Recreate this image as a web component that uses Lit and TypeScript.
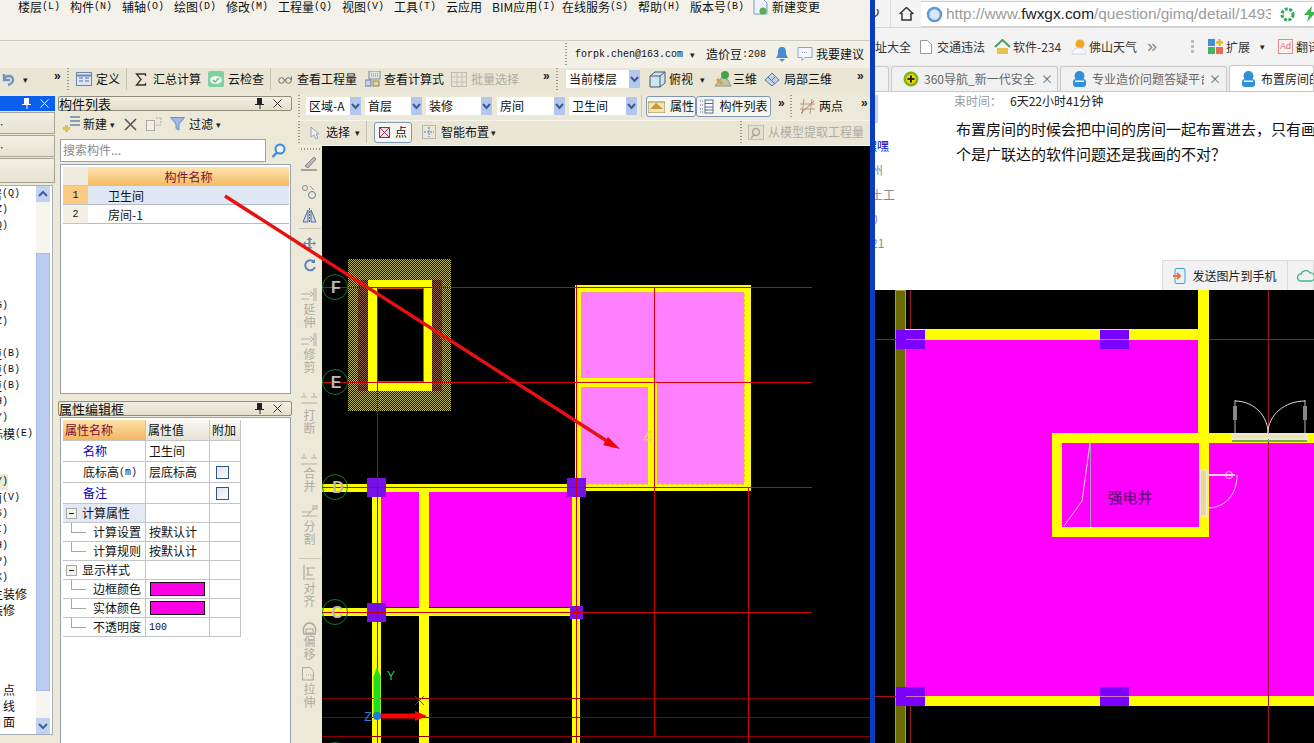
import { html, css, LitElement, TemplateResult } from 'lit';
import { customElement } from 'lit/decorators.js';

type Slot_t = [number, TemplateResult | string];

// icons, all small inline svg
const wrapSvg = (w: number, h: number, inner: string) =>
  html`<svg class="ic" width=${w} height=${h} viewBox="0 0 ${w} ${h}" .innerHTML=${inner}></svg>`;

const icons = {
  undo: wrapSvg(16, 16, '<path d="M4 3v6h6M4 8c2-4 8-4 9 0 .5 3-2 5-5 6" fill="none" stroke="#6f93c9" stroke-width="2.4"/>'),
  define: wrapSvg(16, 14, '<rect x=".5" y=".5" width="15" height="13" fill="#dbe6f6" stroke="#6c86ad"/><path d="M.5 3.5h15" stroke="#6c86ad" stroke-width="2"/><path d="M3 6h4M3 9h4M9 6h4M9 9h4" stroke="#5b7396"/>'),
  sigma: wrapSvg(12, 13, '<path d="M10.5 3V1H1.5l4.5 5.5-4.5 5.5h9v-2" fill="none" stroke="#333" stroke-width="1.3"/>'),
  cloud: wrapSvg(16, 16, '<rect width="16" height="16" rx="2" fill="#7ed2a0"/><ellipse cx="8" cy="9" rx="6" ry="4" fill="#f4f4f0"/><path d="M5 9l2 2 4-4" fill="none" stroke="#62b98a" stroke-width="1.4"/>'),
  glasses: wrapSvg(14, 9, '<circle cx="3.5" cy="5.5" r="2.8" fill="none" stroke="#6d6d66"/><circle cx="10.5" cy="5.5" r="2.8" fill="none" stroke="#6d6d66"/><path d="M6 5h2M13 5l1-4" stroke="#6d6d66"/>'),
  calc: wrapSvg(16, 16, '<rect x="4" y="0" width="11" height="8" fill="#e4e6e4" stroke="#7c8a9c"/><path d="M6 3h7M6 5h7" stroke="#7c8a9c" stroke-dasharray="1 1"/><rect x="0" y="9" width="6" height="6" fill="#c4d4ee" stroke="#6680a6"/><rect x="8" y="10" width="6" height="5" fill="#e8d69a" stroke="#8f8458"/>'),
  batch: wrapSvg(16, 15, '<rect x=".5" y=".5" width="15" height="14" fill="#e6e4d8" stroke="#bdbcb0"/><path d="M1 5h14M1 10h14M6 1v13M11 1v13" stroke="#c3c2b6"/>'),
  box: wrapSvg(17, 17, '<path d="M1 5l5-4h10v11l-5 4H1z" fill="#cfe4ee" stroke="#44596c"/><path d="M1 5h10v11M11 5l5-4" fill="none" stroke="#44596c"/>'),
  tri: wrapSvg(18, 18, '<path d="M1 16l7-9 6 3 3 6z" fill="#b8c8b0" stroke="#8a9a84"/><circle cx="11" cy="5" r="4" fill="#4aa04a"/><path d="M3 9l5 5" stroke="#d8a040" stroke-width="3"/>'),
  local: wrapSvg(16, 15, '<path d="M1 8l7-7 7 7-7 6z" fill="#bdd0e8" stroke="#5f7a9a"/><path d="M4 5l7 7M8 1l3 3M7 9l4-4" stroke="#5f7a9a"/>'),
  bell: wrapSvg(14, 16, '<path d="M7 1c3 0 4 2 4 5 0 3 1 4 2 6H1c1-2 2-3 2-6 0-3 1-5 4-5z" fill="#4d8ad6"/><path d="M4 13h6l-3 3z" fill="#4d8ad6"/>'),
  chat: wrapSvg(16, 16, '<path d="M1 1.5h14v10H8l-3 3v-3H1z" fill="#f4f6fb" stroke="#8ca4cc"/><path d="M5 6.5h6" stroke="#8ca4cc" stroke-dasharray="1 1"/>'),
  fileNew: wrapSvg(15, 17, '<path d="M1 1h9l4 4v11H1z" fill="#eef3fb" stroke="#7c9bc8"/><circle cx="10" cy="13" r="3.5" fill="#58b04e"/>'),
  add: wrapSvg(18, 16, '<path d="M7 1h10M7 5h10M7 9h10" stroke="#6c82a6" stroke-width="1.4"/><rect x="2" y="9" width="3" height="7" fill="#e2c04c"/><rect x="0" y="11" width="7" height="3" fill="#e2c04c"/>'),
  close: wrapSvg(13, 13, '<path d="M1 1l11 11M12 1L1 12" stroke="#555" stroke-width="1.6"/>'),
  copy: wrapSvg(16, 14, '<rect x=".5" y="3.5" width="8" height="10" fill="#f1f0e8" stroke="#a9a9a0"/><path d="M10 1h5M15 1v5M10 8h5" fill="none" stroke="#a9a9a0" stroke-dasharray="2 1"/>'),
  filter: wrapSvg(15, 14, '<path d="M.5 .5h14L9 7v6l-3-1.5V7z" fill="#9bbce8" stroke="#6d8fc0"/>'),
  search: wrapSvg(15, 15, '<circle cx="9" cy="6" r="4.5" fill="#e8f2fc" stroke="#3d8dd6" stroke-width="2"/><path d="M5.5 10L1.5 14" stroke="#3d8dd6" stroke-width="2.4"/>'),
  prop: wrapSvg(17, 13, '<rect y="2" width="17" height="11" fill="#f0e6b8" stroke="#9a8a50"/><path d="M2 9l6-6 7 6z" fill="#c89a30"/>'),
  list: wrapSvg(15, 15, '<rect x="6" y="1" width="8" height="13" fill="#fff" stroke="#55708f"/><path d="M6 4.5h8M6 8h8M6 11h8" stroke="#55708f"/><path d="M1 2h3M1 6h3M1 10h3M1 13h3" stroke="#55708f" stroke-dasharray="1 1"/>'),
  twoPt: wrapSvg(15, 15, '<path d="M4 0l-2 15M12 0l-2 15M0 5h15M0 10h15" stroke="#b09a80"/><path d="M1 14L14 2" stroke="#c07050"/>'),
  cursor: wrapSvg(10, 13, '<path d="M1 1v10l3-2 2 4 2-1-2-4h3z" fill="#eef0f6" stroke="#96a0b0"/>'),
  pt: wrapSvg(11, 11, '<rect x=".5" y=".5" width="10" height="10" fill="#dbe4f4" stroke="#33558a"/><path d="M1 1l9 9M10 1l-9 9" stroke="#b03050"/>'),
  smart: wrapSvg(14, 14, '<rect x=".5" y=".5" width="13" height="13" fill="none" stroke="#7e8a9a" stroke-dasharray="1 1"/><path d="M7 2v10M2 7h10" stroke="#5a7dad" stroke-dasharray="2 1"/>'),
  pick: wrapSvg(16, 15, '<rect x=".5" y=".5" width="15" height="14" fill="#e3e1d2" stroke="#c0bfb2"/><circle cx="8" cy="7" r="3.5" fill="none" stroke="#a9a89c" stroke-width="1.5"/><path d="M6 10l-3 3" stroke="#a9a89c" stroke-width="1.5"/>'),
  brush: wrapSvg(16, 15, '<path d="M4 10L13 1l2 2-8 9z" fill="#b8b8c8" stroke="#888"/><path d="M0 14h16" stroke="#8a8a80" stroke-width="1.5"/>'),
  rings: wrapSvg(15, 15, '<circle cx="3" cy="3" r="2.5" fill="none" stroke="#8a8f96"/><circle cx="10" cy="10" r="3.5" fill="none" stroke="#6e7f96"/><path d="M8 1l4 4" stroke="#8a8f96"/>'),
  mirror: wrapSvg(15, 15, '<path d="M1 14L6 2v12zM14 14L9 2v12z" fill="#cfdaec" stroke="#4f6f9f"/><path d="M7.5 0v15" stroke="#4f6f9f" stroke-dasharray="2 1"/>'),
  move: wrapSvg(13, 13, '<path d="M6.5 0l3 3h-2v3h3V4l2.500 2.500L10.500 9V7h-3v3h2l-3 3-3-3h2V7h-3v2L0 6.500 2.500 4v2h3V3h-2z" fill="#6c88b0"/>'),
  rotate: wrapSvg(13, 13, '<path d="M11 3a5 5 0 1 0 1 5" fill="none" stroke="#5a82c0" stroke-width="2"/><path d="M12 0v4H8z" fill="#5a82c0"/>'),
  extend: wrapSvg(16, 13, '<path d="M0 6h10M13 0v13M15 0v13M0 11h8" stroke="#b2b1a4"/><path d="M9 3l3 3-3 3" fill="none" stroke="#b2b1a4"/>'),
  split: wrapSvg(16, 13, '<path d="M0 4h6M10 4h6M0 10h16M3 0v3M13 0v3" stroke="#b2b1a4"/>'),
  seg: wrapSvg(17, 13, '<path d="M1 11h15M1 7h9M15 1L6 11" stroke="#b2b1a4"/><rect x="12" y="0" width="4" height="4" fill="none" stroke="#b2b1a4"/>'),
  align: wrapSvg(13, 15, '<path d="M1 0v15M3 14h9M3 10h7M3 3h9M5 3v7" stroke="#aaa99c" stroke-width="1.2"/>'),
  offset: wrapSvg(15, 13, '<path d="M2 12c-2-6 1-11 5.500-11S15 6 13 12z" fill="none" stroke="#aaa99c" stroke-width="1.400"/><rect x="4" y="7" width="7" height="4" fill="none" stroke="#aaa99c"/>'),
  stretch: wrapSvg(14, 14, '<path d="M.5 13V.5h8l3 4V13z" fill="none" stroke="#aaa99c"/><path d="M4 8h6v5" fill="none" stroke="#aaa99c" stroke-dasharray="1 1"/>'),
  up: wrapSvg(14, 16, '<rect width="14" height="16" fill="#c2d3f2"/><path d="M3 10l4-4 4 4" fill="none" stroke="#3f5f9a" stroke-width="2"/>'),
  down: wrapSvg(14, 16, '<rect width="14" height="16" fill="#c2d3f2"/><path d="M3 6l4 4 4-4" fill="none" stroke="#3f5f9a" stroke-width="2"/>'),
  combo: wrapSvg(11, 18, '<rect width="11" height="18" fill="#b4c8ee"/><path d="M2 7l3.500 4L9 7" fill="none" stroke="#3c5a96" stroke-width="2"/>'),
  pin: wrapSvg(9, 11, '<path d="M2 0h5v6h2v1H5.500v4h-1V7H0V6h2z" fill="#222"/>'),
  pinW: wrapSvg(9, 11, '<path d="M2 0h5v6h2v1H5.500v4h-1V7H0V6h2z" fill="#fff"/>'),
  xThin: wrapSvg(9, 9, '<path d="M.5 .5l8 8M8.500 .5l-8 8" stroke="#333"/>'),
  xW: wrapSvg(9, 9, '<path d="M.5 .5l8 8M8.500 .5l-8 8" stroke="#fff"/>'),
  home: wrapSvg(15, 14, '<path d="M.5 7L7.500 .5l7 6.500M3 6v7h9V6" fill="none" stroke="#333" stroke-width="1.500"/>'),
  globe: wrapSvg(17, 17, '<circle cx="8.500" cy="8.500" r="6.500" fill="#d6e8f8" stroke="#5a9ad8" stroke-width="2.500"/>'),
  leaf: wrapSvg(15, 15, '<circle cx="7.500" cy="7.500" r="5.500" fill="none" stroke="#34a853" stroke-width="3" stroke-dasharray="3 1.500"/>'),
  bolt: wrapSvg(12, 16, '<path d="M8 0L0 9h5l-2 7 9-10H7z" fill="#3cb54a"/>'),
  page: wrapSvg(12, 14, '<path d="M.5 .5h7l4 4v9H.5z" fill="#fff" stroke="#999"/>'),
  house: wrapSvg(17, 16, '<path d="M1 8l7.500-7 7.500 7" fill="none" stroke="#4a9d5a" stroke-width="2"/><rect x="3" y="9" width="11" height="6" fill="#e6c350"/>'),
  sun: wrapSvg(16, 16, '<circle cx="9" cy="5" r="4.500" fill="#f5a623"/><path d="M1 15c0-4 3-6 7-6s7 2 7 6z" fill="#f4f6f8" stroke="#cfd8e0"/>'),
  ext: wrapSvg(15, 15, '<rect width="7" height="7" fill="#3f8ce0"/><rect y="8" width="7" height="7" fill="#40b55c"/><rect x="8" y="8" width="7" height="7" fill="#ea6a5a"/><path d="M11.500 0v7M8 3.500h7" stroke="#f0b429" stroke-width="2.400"/>'),
  user: wrapSvg(15, 16, '<circle cx="7.500" cy="5" r="5" fill="#2f8fd8"/><rect x="1" y="8" width="13" height="8" rx="3" fill="#2f8fd8"/><rect x="3" y="9.500" width="9" height="1.500" fill="#fff"/>'),
  green360: wrapSvg(16, 16, '<circle cx="8" cy="8" r="7.500" fill="#7ab51d"/><circle cx="8" cy="8" r="5" fill="#f5d100"/><path d="M8 4.500v7M4.500 8h7" stroke="#2a2a2a" stroke-width="2"/>'),
  send: wrapSvg(13, 16, '<rect x="2" y=".5" width="10" height="15" rx="1" fill="#e4f2fb" stroke="#3aa0dc"/><path d="M0 8h7M4 5l3 3-3 3" fill="none" stroke="#ef6a3a" stroke-width="2"/>'),
  cloudO: wrapSvg(18, 12, '<path d="M4 11a3.500 3.500 0 0 1 0-7 5 5 0 0 1 9-1 4 4 0 0 1 1 8z" fill="none" stroke="#41b883" stroke-width="1.300"/>'),
};

const combo = (label: string, x2: number) => html`<span class="combo" style="width:${x2}px"><span class="cv">${label}</span>${icons.combo}</span>`;
const dd = html`<span class="dd">▾</span>`;
const grip = html`<span class="grip"></span>`;
const vsep = html`<span class="vsep"></span>`;
const more = html`<span class="more">»</span>`;
const k = (s: string) => html`<span class="k">${s}</span>`;

const menuItems: Slot_t[] = [
  [-15, html`${k(')')}`], [18, html`楼层${k('(L)')}`], [70, html`构件${k('(N)')}`], [122, html`辅轴${k('(O)')}`],
  [174, html`绘图${k('(D)')}`], [226, html`修改${k('(M)')}`], [278, html`工程量${k('(Q)')}`], [342, html`视图${k('(V)')}`],
  [394, html`工具${k('(T)')}`], [446, '云应用'], [492, html`BIM应用${k('(I)')}`], [562, html`在线服务${k('(S)')}`],
  [638, html`帮助${k('(H)')}`], [690, html`版本号${k('(B)')}`], [753, icons.fileNew], [772, '新建变更'],
];

const subItems: Slot_t[] = [
  [565, grip], [575, html`<span class="mono">forpk.chen@163.com</span>`], [690, dd], [706, html`造价豆${k(':208')}`],
  [775, icons.bell], [797, icons.chat], [816, '我要建议'],
];

const mainBar: Slot_t[] = [
  [0, icons.undo], [23, dd], [54, more], [67, grip], [76, icons.define], [96, '定义'], [126, vsep], [135, icons.sigma],
  [153, '汇总计算'], [208, icons.cloud], [228, '云检查'], [270, vsep], [278, icons.glasses], [297, '查看工程量'],
  [365, icons.calc], [384, '查看计算式'], [451, icons.batch], [471, html`<span class="dim">批量选择</span>`], [543, more], [556, grip],
  [566, combo('当前楼层', 74)], [649, icons.box], [669, '俯视'], [700, dd], [714, icons.tri], [733, '三维'],
  [764, icons.local], [784, '局部三维'], [857, more],
];

const drawBarA: Slot_t[] = [
  [2, grip], [10, combo('区域-A', 55)], [69, combo('首层', 57)], [130, combo('装修', 66)], [201, combo('房间', 68)],
  [273, combo('卫生间', 68)], [345, vsep],
  [350, html`<span class="tbtn" style="width:50px">${icons.prop}<span>属性</span></span>`],
  [400, html`<span class="tbtn" style="width:75px">${icons.list}<span>构件列表</span></span>`],
  [482, more], [494, grip], [504, icons.twoPt], [523, '两点'], [565, more],
];

const drawBarB: Slot_t[] = [
  [2, grip], [14, icons.cursor], [30, '选择'], [59, dd], [70, vsep],
  [78, html`<span class="tbtn" style="width:38px">${icons.pt}<span>点</span></span>`],
  [126, icons.smart], [145, '智能布置'], [195, dd], [444, grip], [452, icons.pick],
  [472, html`<span class="dim">从模型提取工程量</span>`],
];

const sideBar: Slot_t[] = [
  [2, html`<span class="hgrip"></span>`], [10, icons.brush], [39, icons.rings], [62, icons.mirror], [82, html`<span class="hsep"></span>`],
  [91, icons.move], [113, icons.rotate], [142, icons.extend], [157, html`<span class="vt">延伸</span>`],
  [187, icons.extend], [202, html`<span class="vt">修剪</span>`], [247, icons.split], [263, html`<span class="vt">打断</span>`],
  [308, icons.split], [321, html`<span class="vt">合并</span>`], [359, icons.seg], [374, html`<span class="vt">分割</span>`],
  [412, html`<span class="hsep"></span>`], [419, icons.align], [436, html`<span class="vt">对齐</span>`],
  [476, icons.offset], [489, html`<span class="vt">偏移</span>`], [521, icons.stretch], [537, html`<span class="vt">拉伸</span>`],
];

const navRows: [number, string, number][] = [
  [0, '居(Q)', 20], [1, 'Z)', 8], [2, 'Q)', 8], [7, 'G)', 8], [8, 'Z)', 8], [10, '更(B)', 20], [11, '更(B)', 20], [12, '更(B)', 20],
  [13, 'H)', 8], [14, 'Y)', 8], [15, '标模(E)', 33], [18, 'Y)', 8], [19, '面(V)', 20], [20, 'S)', 8], [21, 'I)', 8], [22, 'H)', 8],
  [23, 'P)', 8], [24, 'X)', 8], [25, '主装修', 27], [26, '装修', 15], [31, '点', 15], [32, '线', 15], [33, '面', 15],
];

const bookmarks: Slot_t[] = [
  [-12, '网址大全'], [45, icons.page], [62, '交通违法'], [119, icons.house], [138, '软件-234'], [196, icons.sun], [214, '佛山天气'],
  [272, html`<span class="bm-more">»</span>`], [316, html`<span class="bgrip"></span>`], [333, icons.ext], [351, '扩展'], [385, dd],
  [403, html`<span class="adbox">Ad</span>`], [421, '翻译'],
];

@customElement('app-root')
export class AppRoot extends LitElement {
  static styles = css`
    :host { display: block; width: 1314px; height: 743px; overflow: hidden; position: relative;
      font: 12px/16px "Noto Sans CJK SC", "Liberation Sans", sans-serif; color: #111; background: #ece9d8; }
    .root { display: flex; height: 743px; }
    .app { width: 870px; display: flex; flex-direction: column; flex: none; }
    .edge { width: 5px; background: #0a3cc0; flex: none; }
    .side { flex: 1; min-width: 0; display: flex; flex-direction: column; overflow: hidden; }

    .ic { display: block; flex: none; }
    .slots { display: flex; align-items: center; white-space: nowrap; }
    .slot { flex: none; display: flex; align-items: center; }
    .k { font: 10px "Liberation Mono", monospace; }
    .mono { font: 10px "Liberation Mono", monospace; letter-spacing: 0; }
    .dim { color: #aeada0; }
    .dd { font-size: 9px; color: #222; line-height: 1; }
    .more { font: bold 12px "Liberation Sans", sans-serif; color: #222; margin-top: -6px; }
    .grip { display: block; width: 2px; height: 22px; background: repeating-linear-gradient(#9c9a88 0 1px, transparent 1px 3px); }
    .hgrip { display: block; width: 20px; height: 2px; margin-left: 3px; background: repeating-linear-gradient(90deg, #9c9a88 0 1px, transparent 1px 3px); }
    .vsep { display: block; width: 1px; height: 22px; background: #c8c6b4; }
    .hsep { display: block; width: 22px; height: 1px; margin-left: 2px; background: #c8c6b4; }

    .menu { height: 40px; background: #f3f1e9; border-bottom: 1px solid #cfcdbc; flex: none; overflow: hidden; line-height: 12px; }
    .menu .slot { height: 13px; }
    .sub { height: 25px; padding-top: 2px; background: #f2f0e7; flex: none; }
    .main { height: 27px; background: #e9e6d5; flex: none; }

    .combo { display: flex; align-items: center; justify-content: space-between; height: 18px; background: #fff; padding-left: 3px; box-sizing: border-box; }
    .combo .cv { flex: 1; }
    .tbtn { display: flex; align-items: center; gap: 5px; justify-content: center; height: 21px; box-sizing: border-box;
      border: 1px solid #8296b4; border-radius: 3px; background: #f6f6f0; }

    .work { flex: 1; display: flex; min-height: 0; }
    .nav { width: 55px; flex: none; display: flex; flex-direction: column; background: #ece9d8; padding-top: 1px; }
    .ttl-blue { height: 15px; background: #0a5fee; display: flex; align-items: center; justify-content: flex-end; gap: 9px; padding-right: 6px; flex: none; }
    .acc { height: 22px; margin-top: 1px; border: solid #a5a394; border-width: 1px 1px 1px 0; box-sizing: border-box; background: linear-gradient(#f2f0e5, #e6e3d2); flex: none; display: flex; align-items: center; }
    .acc.l { height: 25px; }
    .navbody { flex: 1; display: flex; margin: 2px 2px 8px 0; background: #fff; border: solid #a9adb6; border-width: 1px 1px 1px 0; min-height: 0; }
    .navlist { width: 36px; flex: none; overflow: hidden; }
    .navrow { height: 16px; display: flex; justify-content: flex-end; overflow: hidden; white-space: nowrap; font: 12px/16px "Noto Sans CJK SC", sans-serif; }
    .navrow .k { line-height: 16px; }
    .navrow.sel { background: #ecead8; }
    .scroll { width: 14px; display: flex; flex-direction: column; background: #f6f5ef; }
    .track { height: 51px; flex: none; }
    .thumb { flex: 1; background: #b9ccf2; border: 1px solid #a6bbe6; box-sizing: border-box; }
    .track.b { height: 27px; }

    .mid { width: 234px; margin-left: 3px; flex: none; display: flex; flex-direction: column; padding-top: 1px; }
    .ttl { height: 15px; box-sizing: border-box; border: 1px solid #8f8d7c; border-radius: 2px; background: linear-gradient(#f2f0e4, #e3e0cc);
      display: flex; align-items: center; flex: none; font-size: 13px; line-height: 13px; white-space: nowrap; }
    .ttl.second { margin-top: 7px; }
    .ttl .t { flex: 1; }
    .ttl .ic { margin-right: 9px; }
    .midbar { height: 26px; flex: none; }
    .midbar .slots { height: 100%; }
    .searchrow { display: flex; gap: 5px; align-items: center; height: 26px; flex: none; padding-left: 2px; }
    .search { width: 206px; height: 23px; box-sizing: border-box; border: 1px solid #9aa2ae; background: #fff; color: #8a8a8a; padding-left: 2px; line-height: 19px; }
    .list { height: 230px; margin: 1px 1px 0 2px; box-sizing: border-box; border: 1px solid #98a2ae; background: #fff; padding: 2px;
      flex: none; display: grid; grid-template-columns: 25px 201px; grid-auto-rows: 19px; }
    .hd0 { background: #f0ede0; border-bottom: 1px solid #c8c6b8; }
    .hd1 { background: linear-gradient(#fde3ad, #f4bb63); color: #7a0f33; text-align: center; line-height: 20px; }
    .n { background: #f3f1e6; text-align: center; border-bottom: 1px solid #c0c4cc; font: 10px/19px "Liberation Mono", monospace; }
    .n.on { background: #fcca82; }
    .c { border-bottom: 1px solid #b8bcc6; padding-left: 20px; line-height: 19px; }
    .c.on { background: #dfe7f5; }

    .props { flex: 1; margin: 1px 1px 0 2px; border: 1px solid #98a2ae; border-bottom: 0; background: #fff; padding: 2px; min-height: 0; }
    .pt { display: grid; grid-template-columns: 83px 64px 31px; width: 178px; }
    .cell { box-sizing: border-box; border: solid #c2c5ca; border-width: 0 1px 1px 0; height: 19px; display: flex; align-items: center; padding-left: 3px; white-space: nowrap; position: relative; font-size: 12px; }
    .cell.tall { height: 21px; }
    .ph { height: 21px; background: linear-gradient(#f9f8f2, #e5e2d5); padding-left: 2px; }
    .ph.o { background: linear-gradient(#fde0a8, #f4b660); color: #7a0f33; }
    .nm { padding-left: 20px; }
    .blue { color: #0000c0; }
    .g { padding-left: 3px; gap: 5px; }
    .g.hi { background: #e2e9f4; }
    .tr { padding-left: 30px; }
    .tr::before { content: ""; position: absolute; left: 8px; top: 0; width: 14px; height: 9px; border: solid #a8a89c; border-width: 0 0 1px 1px; }
    .pm { width: 11px; height: 11px; box-sizing: border-box; border: 1px solid #a8a89c; background: #f4f3ec; display: flex; align-items: center; justify-content: center; }
    .pm::before { content: ""; width: 5px; height: 1px; background: #222; }
    .chk { display: block; width: 13px; height: 13px; margin-left: 3px; box-sizing: border-box; border: 1px solid #33558a; background: linear-gradient(135deg, #dde3ea, #fff); }
    .sw { width: 55px; height: 14px; margin-left: 1px; box-sizing: border-box; background: #ff00e6; border: 1px solid #111; }
    .num { font: 10px "Liberation Mono", monospace; }

    .draw { flex: 1; margin-left: 4px; min-width: 0; display: flex; flex-direction: column; }
    .dbar { height: 25px; flex: none; border-bottom: 1px solid #f5f4ec; }
    .dbar.b { height: 24px; background: #e9e6d5; }
    .cadrow { flex: 1; display: flex; min-height: 0; }
    .vbar { width: 26px; flex: none; display: flex; flex-direction: column; align-items: center; color: #aeada0; overflow: hidden; }
    .vslot { flex: none; display: flex; justify-content: center; width: 26px; }
    .vt { writing-mode: vertical-rl; font-size: 12px; line-height: 12px; letter-spacing: 1px; }
    .cad { flex: 1; background: #000; display: block; min-width: 0; }

    .bnav { height: 28px; flex: none; background: #f4f4f4; display: flex; align-items: stretch; border-bottom: 1px solid #d6d6d6; box-sizing: border-box; }
    .refresh { width: 15px; border-right: 1px solid #ddd; overflow: hidden; font: 16px/26px "DejaVu Sans", sans-serif; color: #444; text-indent: -8px; }
    .home { width: 30px; display: flex; align-items: center; justify-content: center; }
    .addr { flex: 1; background: #fff; border: 1px solid #d0d0d0; border-width: 1px 0; display: flex; align-items: center; gap: 3px; padding-left: 5px; min-width: 0; margin-top: 1px; }
    .url { width: 325px; overflow: hidden; white-space: nowrap; flex: none; font: 15.400px/24px "Liberation Sans", sans-serif; color: #9c9c9c; }
    .url b { font-weight: normal; color: #222; }
    .addr .ic { margin-left: 6px; }
    .addr .ic:first-child { margin-left: 0; }
    .bmarks { height: 37px; flex: none; background: #f3f3f3; color: #333; }
    .bmarks .slots { height: 100%; }
    .bm-more { font: 18px "Liberation Sans", sans-serif; color: #888; }
    .bgrip { display: block; width: 3px; height: 14px; background: repeating-linear-gradient(#bbb 0 3px, transparent 3px 5px); }
    .adbox { display: block; width: 15px; height: 15px; box-sizing: border-box; border: 1px solid #e08a8a; font: 9px/13px "Liberation Sans", sans-serif; color: #d66; text-align: center; background: #fdf2f2; }
    .tabs { height: 27px; flex: none; background: #ececec; display: flex; align-items: flex-end; gap: 2px; border-bottom: 1px solid #c9c9c9; box-sizing: border-box; overflow: hidden; }
    .tab { height: 25px; box-sizing: border-box; flex: none; border: 1px solid #c9c9c9; border-bottom: 0; border-radius: 3px 3px 0 0; background: #f1f1f1;
      display: flex; align-items: center; gap: 5px; padding-left: 11px; color: #666; white-space: nowrap; overflow: hidden; }
    .tab.stub { width: 14px; padding: 0; border-left: 0; }
    .tab.w { width: 167px; }
    .tab .lbl { width: 112px; overflow: hidden; }
    .tab.on { flex: 1; background: #fff; color: #222; height: 27px; margin-bottom: -1px; }
    .page { height: 198px; flex: none; background: #fff; display: flex; position: relative; overflow: hidden; }
    .ps { width: 79px; flex: none; padding-top: 44px; color: #888; overflow: hidden; }
    .ps .hl { position: absolute; left: 0; top: 3px; width: 3px; height: 28px; background: #c8d4f0; }
    .ps div { height: 24.300px; line-height: 20px; margin-left: -4px; }
    .ps .lnk { color: #00c; margin-left: -10px; }
    .art { flex: 1; min-width: 0; white-space: nowrap; padding-top: 1px; }
    .tm { height: 16px; color: #222; font-size: 12px; }
    .tm span { color: #999; margin-right: 8px; }
    .q { font-size: 15px; line-height: 25px; color: #111; margin-left: 2px; }
    .q.top { margin-top: 7px; }
    .sendbar { position: absolute; right: 0; bottom: 0; height: 30px; width: 152px; display: flex; background: #f2f2f2; border: 1px solid #ddd; border-bottom: 0; box-sizing: border-box; }
    .sendbtn { width: 124px; display: flex; align-items: center; justify-content: center; gap: 6px; flex: none; border-right: 1px solid #ddd; color: #222; }
    .cloudb { flex: 1; display: flex; align-items: center; padding-left: 9px; }
    .cad2 { flex: 1; display: block; background: #000; min-height: 0; }
    .arrow { position: absolute; left: 0; top: 0; pointer-events: none; }
  `;

  // lays children out from a list of left offsets, each slot running up to the next one
  private slots(items: Slot_t[]) {
    return html`<div class="slots">
      ${items.map(([x, t], i) => {
        const next = i + 1 < items.length ? items[i + 1][0] : x + 200;
        const ml = i === 0 ? x : 0;
        return html`<span class="slot" style="width:${next - x}px;margin-left:${ml}px">${t}</span>`;
      })}
    </div>`;
  }

  private vslots(items: Slot_t[]) {
    return items.map(([y, t], i) => {
      const next = i + 1 < items.length ? items[i + 1][0] : y + 40;
      const mt = i === 0 ? y : 0;
      return html`<span class="vslot" style="height:${next - y}px;margin-top:${mt}px">${t}</span>`;
    });
  }

  private cadLeft() {
    return html`<svg class="cad" viewBox="322 146 548 597" width="548" height="597" shape-rendering="crispEdges">
      <defs>
        <pattern id="st" width="2" height="2" patternUnits="userSpaceOnUse"><rect width="1" height="1" fill="#c4bf40"/><rect x="1" y="1" width="1" height="1" fill="#c4bf40"/></pattern>
        <pattern id="st2" width="2" height="2" patternUnits="userSpaceOnUse"><rect width="1" height="1" fill="#96683a"/><rect x="1" y="1" width="1" height="1" fill="#96683a"/></pattern>
      </defs>
      <rect x="348" y="259" width="103" height="152" fill="url(#st)"/>
      <rect x="358" y="280" width="84" height="111" fill="#000"/>
      <rect x="358" y="280" width="84" height="111" fill="url(#st2)"/>
      <rect x="368" y="280" width="64" height="111" fill="#ff0"/>
      <rect x="377.500" y="288.500" width="46" height="93" fill="#000" stroke="#c85020"/>

      <rect x="575" y="285" width="176" height="206" fill="#ff0"/>
      <rect x="581" y="292" width="163" height="192" fill="#ff80ff" stroke="#e8a070" stroke-opacity=".7" stroke-dasharray="3 2"/>
      <rect x="577" y="378" width="78" height="9" fill="#ff0"/>
      <rect x="648" y="383" width="9" height="105" fill="#ff0"/>

      <rect x="322" y="484" width="255" height="8" fill="#ff0"/>
      <rect x="372" y="484" width="9" height="259" fill="#ff0"/>
      <rect x="572" y="484" width="8" height="259" fill="#ff0"/>
      <rect x="381" y="492" width="191" height="115" fill="#f0f"/>
      <rect x="419" y="492" width="10" height="251" fill="#ff0"/>
      <rect x="322" y="608" width="258" height="8" fill="#ff0"/>

      <g fill="#d00000">
        <rect x="322" y="287" width="490" height="1"/><rect x="322" y="382" width="490" height="1"/>
        <rect x="322" y="487" width="490" height="1"/><rect x="322" y="612" width="490" height="1"/>
        <rect x="377" y="287" width="1" height="456"/><rect x="576" y="285" width="1" height="458"/>
        <rect x="654" y="287" width="1" height="448"/><rect x="748" y="487" width="1" height="256"/>
      </g>
      <g fill="#8a0000">
        <rect x="322" y="698" width="548" height="1"/><rect x="322" y="717" width="548" height="1"/><rect x="322" y="736" width="548" height="1"/>
      </g>

      <g fill="#7a10e8">
        <rect x="367" y="478" width="19" height="19"/><rect x="567" y="478" width="19" height="19"/>
        <rect x="367" y="603" width="19" height="19"/><rect x="570" y="606" width="13" height="13"/>
      </g>
      <path d="M367 487.500h19M367 612.500h19M377.500 478v19M377.500 603v19M567 487.500h19M576.500 478v19M570 612.500h13M576.500 606v13" stroke="#d00000"/>

      <g shape-rendering="auto">
        <g fill="none" stroke="#0f7a2a">
          <circle cx="335" cy="287" r="12.500"/><circle cx="335" cy="382" r="12.500"/>
          <circle cx="335" cy="487" r="12.500"/><circle cx="335" cy="612" r="12.500"/><circle cx="335" cy="755" r="12.500"/>
        </g>
        <g fill="#bbb" font-family="Liberation Sans, sans-serif" font-size="16" font-weight="bold" text-anchor="middle">
          <text x="336" y="293">F</text><text x="336" y="388">E</text><text x="338" y="493">D</text><text x="337" y="618">C</text>
        </g>
        <text x="648" y="443" font-family="Liberation Sans, sans-serif" font-size="18" fill="#f8d860" text-anchor="middle">4</text>
        <path d="M377 716v-38" stroke="#1fe01f" stroke-width="7"/><path d="M373 678h8l-4-11z" fill="#1fe01f"/>
        <path d="M377 716h39" stroke="#f00" stroke-width="5"/><path d="M415 711v10l12-5z" fill="#f00"/>
        <circle cx="377" cy="716" r="4" fill="#1a7ae0"/>
        <text x="391" y="680" font-family="Liberation Sans, sans-serif" font-size="12" fill="#2ecc40" text-anchor="middle">Y</text>
        <text x="368" y="721" font-family="Liberation Sans, sans-serif" font-size="12" fill="#3a7ae0" text-anchor="middle">Z</text>
        <path d="M415 696l9 9M424 696l-9 9" stroke="#c81010"/>
      </g>
    </svg>`;
  }

  private cadRight() {
    return html`<svg class="cad2" viewBox="875 290 439 453" width="439" height="453" shape-rendering="crispEdges">
      <rect x="905" y="340" width="293" height="356" fill="#f0f"/>
      <rect x="905" y="442" width="409" height="254" fill="#f0f"/>
      <rect x="895" y="290" width="10" height="453" fill="#6b6b00" stroke="#a8a040"/>
      <rect x="905" y="329" width="304" height="11" fill="#ff0"/>
      <rect x="1198" y="290" width="11" height="150" fill="#ff0"/>
      <rect x="905" y="696" width="409" height="10" fill="#ff0"/>
      <rect x="1052" y="433" width="262" height="10" fill="#ff0"/>
      <rect x="1052" y="433" width="10" height="104" fill="#ff0"/>
      <rect x="1052" y="527" width="157" height="10" fill="#ff0"/>
      <rect x="1199" y="433" width="10" height="104" fill="#ff0"/>
      <path d="M875 339.500h21M875 696.500h21M1209 339.500h105" stroke="#b01010"/>
      <path d="M910.500 290v39M910.500 706v37" stroke="#a01030"/>
      <path d="M1268.500 290v453" stroke="#a01030"/>
      <g fill="#7a00ff">
        <rect x="896" y="330" width="29" height="19"/><rect x="1100" y="330" width="29" height="19"/>
        <rect x="896" y="687" width="29" height="19"/><rect x="1100" y="687" width="29" height="19"/>
      </g>
      <path d="M906 339.500h19M1100 339.500h29M906 696.500h19M1100 696.500h29" stroke="#ffa0a0" stroke-opacity=".7"/>
      <g shape-rendering="auto" fill="none">
        <path d="M1090 443l-8 58-18 25" stroke="#f8d0f8"/>
        <path d="M1090.500 443v84" stroke="#b090c0"/>
        <path d="M1235 400v33M1305 400v33" stroke="#c0c0c0"/>
        <path d="M1235 401c20 0 33 16 33 32M1305 401c-20 0-37 14-37 32" stroke="#ddd"/>
        <rect x="1233" y="406" width="4" height="14" fill="#888"/><rect x="1303" y="406" width="4" height="14" fill="#888"/>
        <rect x="1232" y="434" width="75" height="5" fill="#e8e4b0" stroke="#eee"/>
        <path d="M1232 441h75" stroke="#80a060" stroke-width="2"/>
        <rect x="1200.500" y="470" width="6" height="46" fill="#e8d890" stroke="#eee"/>
        <path d="M1207 475h28" stroke="#eecbe8" stroke-width="2"/>
        <circle cx="1229" cy="475" r="3.500" stroke="#eecbe8"/>
        <path d="M1237 475c0 20-12 33-30 33" stroke="#f8d8f8"/>
      </g>
      <text x="1130" y="503" font-family="Noto Sans CJK SC, sans-serif" font-size="15" font-weight="500" fill="#6c0a80" text-anchor="middle" shape-rendering="auto">强电井</text>
    </svg>`;
  }

  render() {
    return html`
      <div class="root">
        <div class="app">
          <div class="menu">${this.slots(menuItems)}</div>
          <div class="sub">${this.slots(subItems)}</div>
          <div class="main">${this.slots(mainBar)}</div>
          <div class="work">
            <div class="nav">
              <div class="ttl-blue">${icons.pinW}${icons.xW}</div>
              <div class="acc">∙</div>
              <div class="acc">∙</div>
              <div class="acc l"></div>
              <div class="navbody">
                <div class="navlist">
                  ${Array.from({ length: 34 }, (_, i) => {
                    const r = navRows.find((n) => n[0] === i);
                    if (!r) return html`<div class="navrow"></div>`;
                    const m = r[1].match(/^([^(A-Z]*)(.*)$/)!;
                    return html`<div class="navrow ${i === 18 ? 'sel' : ''}" style="width:${r[2]}px"><span>${m[1]}</span>${m[2] ? k(m[2]) : ''}</div>`;
                  })}
                </div>
                <div class="scroll">
                  ${icons.up}
                  <div class="track"></div>
                  <div class="thumb"></div>
                  <div class="track b"></div>
                  ${icons.down}
                </div>
              </div>
            </div>

            <div class="mid">
              <div class="ttl"><span class="t">构件列表</span>${icons.pin}${icons.xThin}</div>
              <div class="midbar">${this.slots([
                [5, icons.add], [25, '新建'], [52, dd], [66, icons.close], [88, icons.copy], [112, icons.filter], [131, '过滤'], [158, dd],
              ])}</div>
              <div class="searchrow"><div class="search">搜索构件...</div>${icons.search}</div>
              <div class="list">
                <div class="hd0"></div><div class="hd1">构件名称</div>
                <div class="n on">1</div><div class="c on">卫生间</div>
                <div class="n">2</div><div class="c">房间-1</div>
              </div>
              <div class="ttl second"><span class="t">属性编辑框</span>${icons.pin}${icons.xThin}</div>
              <div class="props">
                <div class="pt">
                  <div class="cell ph o">属性名称</div><div class="cell ph">属性值</div><div class="cell ph">附加</div>
                  <div class="cell tall nm blue">名称</div><div class="cell tall">卫生间</div><div class="cell tall"></div>
                  <div class="cell tall nm">底标高${k('(m)')}</div><div class="cell tall">层底标高</div><div class="cell tall"><span class="chk"></span></div>
                  <div class="cell tall nm blue">备注</div><div class="cell tall"></div><div class="cell tall"><span class="chk"></span></div>
                  <div class="cell g hi"><span class="pm"></span>计算属性</div><div class="cell"></div><div class="cell"></div>
                  <div class="cell tr">计算设置</div><div class="cell">按默认计</div><div class="cell"></div>
                  <div class="cell tr">计算规则</div><div class="cell">按默认计</div><div class="cell"></div>
                  <div class="cell g"><span class="pm"></span>显示样式</div><div class="cell"></div><div class="cell"></div>
                  <div class="cell tr">边框颜色</div><div class="cell"><span class="sw"></span></div><div class="cell"></div>
                  <div class="cell tr">实体颜色</div><div class="cell"><span class="sw"></span></div><div class="cell"></div>
                  <div class="cell tr">不透明度</div><div class="cell"><span class="num">100</span></div><div class="cell"></div>
                </div>
              </div>
            </div>

            <div class="draw">
              <div class="dbar">${this.slots(drawBarA)}</div>
              <div class="dbar b">${this.slots(drawBarB)}</div>
              <div class="cadrow">
                <div class="vbar">${this.vslots(sideBar)}</div>
                ${this.cadLeft()}
              </div>
            </div>
          </div>
        </div>
        <div class="edge"></div>
        <div class="side">
          <div class="bnav">
            <div class="refresh">↻</div>
            <div class="home">${icons.home}</div>
            <div class="addr">${icons.globe}
              <div class="url">http://www.<b>fwxgx.com</b>/question/gimq/detail/1493</div>
              ${icons.leaf}${icons.bolt}
            </div>
          </div>
          <div class="bmarks">${this.slots(bookmarks)}</div>
          <div class="tabs">
            <div class="tab stub"></div>
            <div class="tab w">${icons.green360}<span class="lbl">360导航_新一代安全上网</span><span>×</span></div>
            <div class="tab w">${icons.user}<span class="lbl">专业造价问题答疑平台</span><span>×</span></div>
            <div class="tab on">${icons.user}<span>布置房间的</span></div>
          </div>
          <div class="page">
            <div class="ps">
              <span class="hl"></span>
              <div class="lnk">嘿嘿</div><div>州</div><div>土工</div><div>0</div><div>21</div>
            </div>
            <div class="art">
              <div class="tm"><span>束时间：</span>6天22小时41分钟</div>
              <div class="q top">布置房间的时候会把中间的房间一起布置进去，只有画</div>
              <div class="q">个是广联达的软件问题还是我画的不对？</div>
            </div>
            <div class="sendbar">
              <div class="sendbtn">${icons.send}发送图片到手机</div>
              <div class="cloudb">${icons.cloudO}</div>
            </div>
          </div>
          ${this.cadRight()}
        </div>
      </div>
      <svg class="arrow" width="1314" height="743" viewBox="0 0 1314 743">
        <path d="M225 196L610 443" stroke="#e81010" stroke-width="3.400"/>
        <path d="M608 437l-5 8 17 4z" fill="#f00000"/>
      </svg>
    `;
  }
}
